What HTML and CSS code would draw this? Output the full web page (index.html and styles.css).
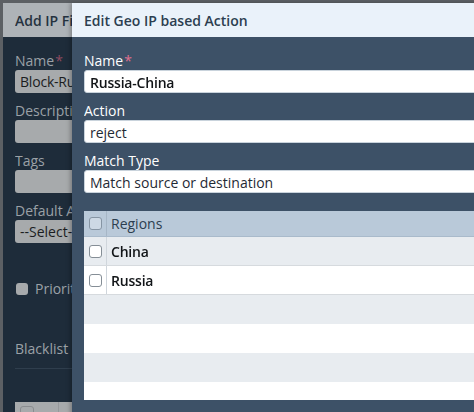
FILE: index.html
```html
<!DOCTYPE html>
<html lang="en">
<head>
<meta charset="utf-8">
<title>Edit Geo IP based Action</title>
<link rel="stylesheet" href="styles.css">
</head>
<body>
<div class="desk">
  <section class="dlg back">
    <header class="dlg-head"><h2 class="dlg-title">Add IP Filter</h2></header>
    <div class="dlg-body">
      <div class="field">
        <label class="lbl">Name<span class="req">*</span></label>
        <div class="inp"><span class="blur">Block-Russia-China</span></div>
      </div>
      <div class="field">
        <label class="lbl">Description</label>
        <div class="inp"></div>
      </div>
      <div class="field">
        <label class="lbl">Tags</label>
        <div class="inp"></div>
      </div>
      <div class="field">
        <label class="lbl">Default Action</label>
        <div class="inp">--Select--</div>
      </div>
      <div class="check-row">
        <span class="box"></span><span class="lbl">Priority</span>
      </div>
      <div class="section">Blacklist</div>
      <div class="rule"></div>
      <div class="mini-table"><span class="mini-box"></span><span class="mini-sep"></span></div>
    </div>
  </section>

  <section class="dlg front">
    <header class="dlg-head"><h2 class="dlg-title">Edit Geo IP based Action</h2></header>
    <div class="dlg-body">
      <div class="field">
        <label class="lbl">Name<span class="req">*</span></label>
        <div class="inp"><span class="blur">Russia-China</span></div>
      </div>
      <div class="field">
        <label class="lbl">Action</label>
        <div class="inp">reject</div>
      </div>
      <div class="field">
        <label class="lbl">Match Type</label>
        <div class="inp">Match source or destination</div>
      </div>
      <div class="grid">
        <div class="row head">
          <div class="cell chk"><span class="cb cb-head"></span></div>
          <div class="cell txt">Regions</div>
        </div>
        <div class="row data odd">
          <div class="cell chk"><span class="cb"></span></div>
          <div class="cell txt"><span class="blur">China</span></div>
        </div>
        <div class="row data even">
          <div class="cell chk"><span class="cb"></span></div>
          <div class="cell txt"><span class="blur">Russia</span></div>
        </div>
        <div class="row empty odd"></div>
        <div class="row empty even"></div>
        <div class="row empty odd"></div>
        <div class="row empty even"></div>
      </div>
    </div>
  </section>
</div>
</body>
</html>
```

FILE: styles.css
```css
html, body {
  margin: 0;
  padding: 0;
  overflow: hidden;
}
body {
  width: 474px;
  height: 412px;
  background: #5c6064;
  font-family: "Open Sans", "Liberation Sans", sans-serif;
  font-size: 14px;
}
.desk {
  position: relative;
  width: 474px;
  height: 412px;
  overflow: hidden;
}
.dlg {
  position: absolute;
  top: 3px;
  height: 430px;
  display: flex;
  flex-direction: column;
  overflow: hidden;
}
.dlg-head {
  height: 34px;
  display: flex;
  align-items: center;
  padding: 0 12px;
  flex: none;
  overflow: hidden;
}
.dlg-title {
  margin: 0;
  font-size: 14px;
  font-weight: 600;
  white-space: nowrap;
  min-width: 0;
  overflow: hidden;
}
.dlg-body {
  flex: 1;
  padding: 14px 0 0 12px;
  min-width: 0;
}
.field {
  margin-bottom: 8px;
}
.lbl {
  display: block;
  line-height: 19px;
  white-space: nowrap;
  overflow: hidden;
}
.req {
  margin-left: 1px;
}
.inp {
  height: 23px;
  line-height: 23px;
  padding: 0 5px;
  border-radius: 3px;
  box-sizing: border-box;
  white-space: nowrap;
  overflow: hidden;
}
.blur {
  filter: blur(0.7px);
  display: inline-block;
  color: #111417;
  font-weight: 600;
  letter-spacing: -0.2px;
}

/* back dialog (dimmed) */
.back {
  left: 3px;
  width: 69px;
  background: #1e2c3a;
}
.back .dlg-head {
  background: #aeb3b7;
  padding-right: 0;
}
.back .dlg-title {
  color: #25323f;
}
.back .lbl {
  color: #9ba1a7;
}
.back .req {
  color: #8c4a60;
}
.back .inp {
  background: #a7aaac;
  color: #1b1d1f;
  border-radius: 3px 0 0 3px;
}
.back .blur {
  font-weight: 400;
  color: #1b1d1f;
  filter: none;
}
.check-row {
  display: flex;
  align-items: center;
  gap: 7px;
  margin-top: 36px;
  height: 20px;
  overflow: hidden;
}
.check-row .lbl {
  line-height: 20px;
  min-width: 0;
}
.box {
  flex: none;
  width: 12px;
  height: 12px;
  border-radius: 3px;
  background: #a7aaac;
  margin-left: 1px;
}
.section {
  color: #9ba1a7;
  margin-top: 40px;
  line-height: 20px;
  white-space: nowrap;
  overflow: hidden;
}
.rule {
  margin-top: 9px;
  height: 1px;
  background: #2f3e4d;
}
.mini-table {
  margin-top: 33px;
  height: 24px;
  background: #a7aaac;
  position: relative;
}
.mini-box {
  position: absolute;
  left: 5px;
  top: 4px;
  width: 12px;
  height: 12px;
  border: 1px solid #8a8d90;
  border-radius: 3px;
}
.mini-sep {
  position: absolute;
  left: 43px;
  top: 0;
  width: 1px;
  height: 24px;
  background: #96999c;
}

/* front dialog */
.front {
  left: 72px;
  width: 460px;
  background: #3d5167;
  box-shadow: -2px 0 4px rgba(0, 0, 0, 0.25);
  overflow: visible;
}
.front .dlg-head {
  background: #eaf2fa;
}
.front .dlg-title {
  color: #2c3e50;
}
.front .lbl {
  color: #ffffff;
}
.front .req {
  color: #e0708f;
}
.front .inp {
  background: #ffffff;
  color: #1f2a35;
  border: 1px solid #c9d3dc;
}

.grid {
  margin-top: 18px;
  height: 189px;
  overflow: hidden;
  background: #ffffff;
}
.row {
  display: flex;
  height: 29px;
  box-sizing: border-box;
}
.row.head {
  height: 26px;
  background: #b9c9d9;
  border-bottom: 1px solid #a9bacb;
}
.row.odd {
  background: #e8ecf0;
}
.row.even {
  background: #ffffff;
}
.row.data {
  border-bottom: 1px solid #d6dade;
}
.cell {
  display: flex;
  align-items: center;
}
.cell.chk {
  width: 23px;
  justify-content: center;
  border-right: 1px solid #d0d6dc;
  box-sizing: border-box;
}
.row.head .cell.chk {
  border-right-color: #a6b6c6;
}
.cell.txt {
  padding-left: 4px;
  color: #2c3e50;
}
.cb {
  width: 13px;
  height: 13px;
  border: 1px solid #858e96;
  border-radius: 3px;
  background: #ffffff;
  box-sizing: border-box;
}
.cb-head {
  background: #cdd9e5;
  border-color: #8695a4;
}
```
